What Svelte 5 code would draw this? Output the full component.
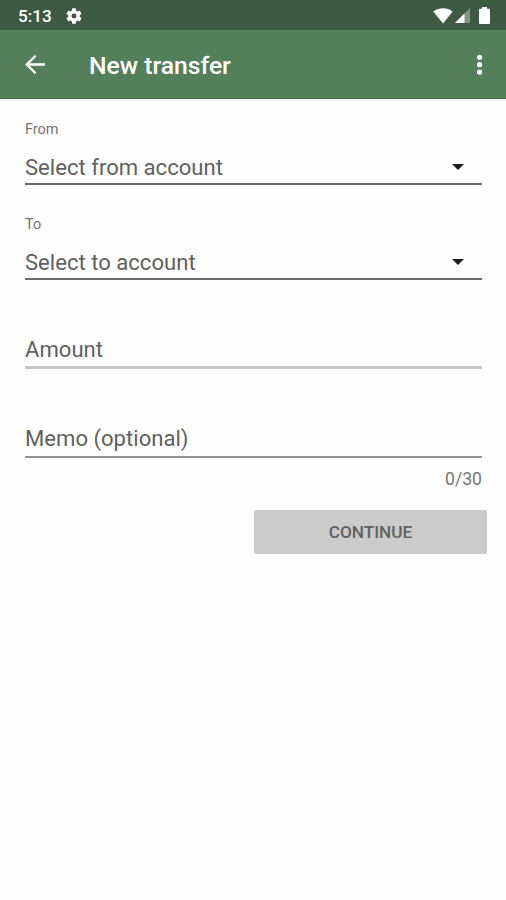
<script lang="ts">
  const accounts = [
    { id: 'from', label: 'From', placeholder: 'Select from account' },
    { id: 'to', label: 'To', placeholder: 'Select to account' },
  ];

  const maxMemo = 30;
  let memo = '';
</script>

<div class="screen">
  <div class="status-bar">
    <span class="time">5:13</span>
    <svg class="gear" viewBox="2 2 20 20" width="16" height="16">
      <path fill="#fff" d="M19.14 12.94c.04-.3.06-.61.06-.94s-.02-.64-.07-.94l2.03-1.58a.49.49 0 0 0 .12-.61l-1.92-3.32a.49.49 0 0 0-.59-.22l-2.39.96a7 7 0 0 0-1.62-.94l-.36-2.54a.48.48 0 0 0-.48-.41h-3.84a.47.47 0 0 0-.47.41l-.36 2.54c-.59.24-1.13.57-1.62.94l-2.39-.96a.48.48 0 0 0-.59.22L2.74 8.87a.48.48 0 0 0 .12.61l2.03 1.58a6.2 6.2 0 0 0-.02 1.88l-2.03 1.58a.49.49 0 0 0-.12.61l1.92 3.32c.12.22.37.29.59.22l2.39-.96c.5.38 1.03.7 1.62.94l.36 2.54c.05.24.24.41.48.41h3.84c.24 0 .44-.17.47-.41l.36-2.54a6.8 6.8 0 0 0 1.62-.94l2.39.96c.22.08.47 0 .59-.22l1.92-3.32a.47.47 0 0 0-.12-.61zM12 15.1a3.1 3.1 0 1 1 0-6.2 3.1 3.1 0 0 1 0 6.2z" />
    </svg>
    <div class="indicators">
      <svg viewBox="0 0 20 16" width="20" height="16">
        <path fill="#fff" d="M.3 3.5C6-.8 14-.8 19.7 3.5L10 15.5z" />
      </svg>
      <svg viewBox="0 0 15 15" width="15" height="15">
        <path fill="#fff" fill-opacity=".35" d="M15 0v15H0z" />
        <path fill="#fff" d="M9.5 5.5V15H0z" />
      </svg>
      <svg class="battery" viewBox="0 0 11 17" width="11" height="17">
        <path fill="#fff" d="M3 0h5v1.7h2a1 1 0 0 1 1 1V16a1 1 0 0 1-1 1H1a1 1 0 0 1-1-1V2.7a1 1 0 0 1 1-1h2z" />
      </svg>
    </div>
  </div>

  <header class="app-bar">
    <button class="icon-btn" aria-label="Back">
      <svg viewBox="0 0 20 20" width="20" height="20">
        <path fill="none" stroke="#fff" stroke-width="2.3" d="M20 10.5H2M10.6 1.7 1.8 10.5l8.8 8.8" />
      </svg>
    </button>
    <h1>New transfer</h1>
    <button class="icon-btn more" aria-label="More options">
      <svg viewBox="0 0 7 21" width="7" height="21">
        <circle cx="3.6" cy="3.3" r="2.6" fill="#fff" />
        <circle cx="3.6" cy="10.7" r="2.6" fill="#fff" />
        <circle cx="3.6" cy="18.1" r="2.6" fill="#fff" />
      </svg>
    </button>
  </header>

  <main>
    {#each accounts as account}
      <div class="select-field">
        <span class="label">{account.label}</span>
        <div class="select" id={account.id}>
          <span>{account.placeholder}</span>
          <svg viewBox="0 0 12 6" width="12" height="6">
            <path fill="#1c1c1c" d="M0 0h12L6 6z" />
          </svg>
        </div>
      </div>
    {/each}

    <div class="text-field amount">Amount</div>
    <div class="text-field memo">Memo (optional)</div>
    <div class="counter">{memo.length}/{maxMemo}</div>

    <button class="continue" disabled>CONTINUE</button>
  </main>
</div>

<style>
  :global(body) {
    background: #fefefe;
  }

  .screen {
    width: 506px;
    height: 900px;
    overflow: hidden;
    background: #fefefe;
    font-family: Roboto, sans-serif;
    color: #616161;
  }

  button {
    padding: 0;
    border: none;
    background: none;
    font-family: inherit;
  }

  svg {
    display: block;
    flex: none;
  }

  .status-bar {
    display: flex;
    align-items: center;
    box-sizing: border-box;
    height: 30px;
    padding: 1px 16px 0 18px;
    background: #3e5b41;
    color: #fff;
  }

  .time {
    width: 48px;
    font-size: 17.2px;
    font-weight: 500;
  }

  .indicators {
    display: flex;
    align-items: center;
    gap: 2px;
    margin-left: auto;
  }

  .battery {
    margin-left: 7px;
  }

  .app-bar {
    display: flex;
    align-items: center;
    box-sizing: border-box;
    height: 69px;
    padding: 0 23px 0 25px;
    background: #547f5b;
    border-bottom: 1px solid #416f4a;
  }

  h1 {
    margin: 2px 0 0 44px;
    color: #fff;
    font-size: 24.7px;
    font-weight: 500;
  }

  .more {
    margin-left: auto;
  }

  main {
    display: flex;
    flex-direction: column;
    padding: 21px 24px 0 25px;
  }

  .select-field {
    height: 95px;
  }

  .label {
    display: block;
    height: 20px;
    font-size: 14.5px;
    line-height: 20px;
    color: #757575;
  }

  .select {
    display: flex;
    align-items: center;
    justify-content: space-between;
    box-sizing: border-box;
    height: 45px;
    padding: 11px 18px 0 0;
    border-bottom: 2px solid #6a6a6a;
    font-size: 22.1px;
  }

  .text-field {
    box-sizing: border-box;
    font-size: 22.1px;
    line-height: 26px;
  }

  .amount {
    height: 59px;
    padding-top: 26px;
    border-bottom: 3px solid #c6c6c6;
  }

  .memo {
    height: 89px;
    padding-top: 56px;
    border-bottom: 2px solid #949494;
  }

  .counter {
    margin-top: 10px;
    font-size: 17.6px;
    line-height: 22px;
    text-align: right;
    color: #757575;
  }

  .continue {
    align-self: flex-end;
    width: 233px;
    height: 44px;
    margin: 20px -5px 0 0;
    border-radius: 2px;
    background: #cbcbcb;
    color: #616161;
    font-size: 17.2px;
    font-weight: 500;
  }
</style>
